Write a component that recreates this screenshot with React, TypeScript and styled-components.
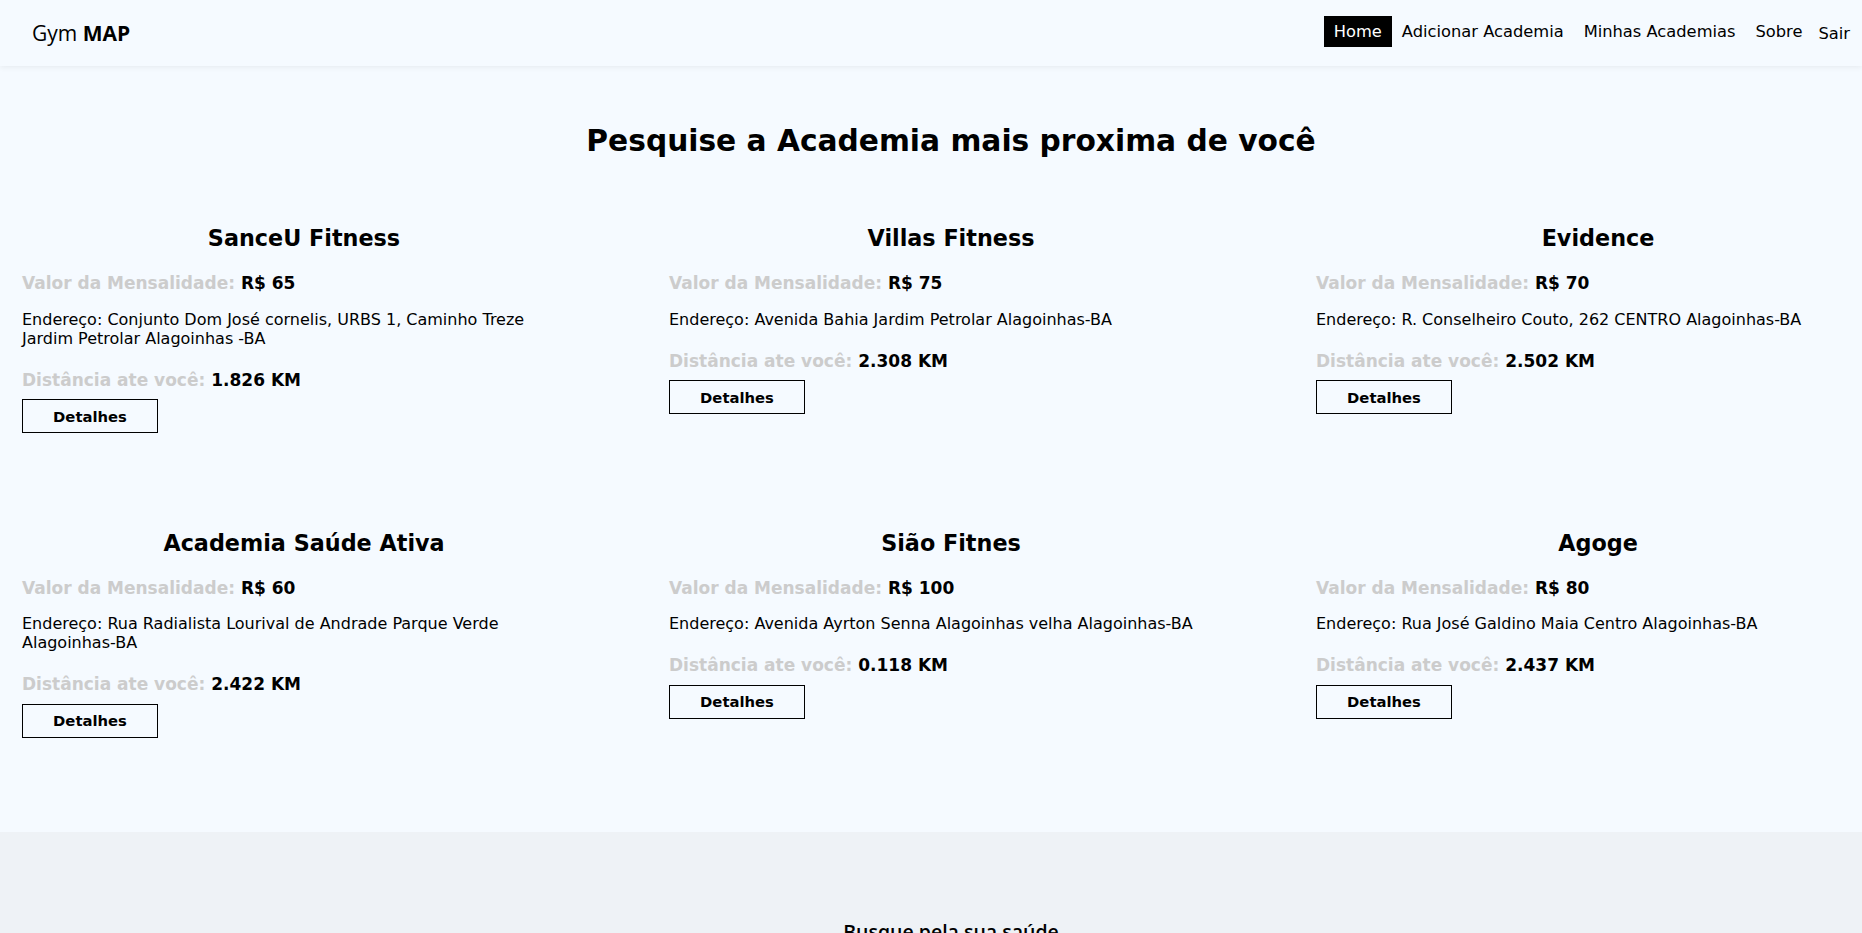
import React from "react";
import styled, { createGlobalStyle } from "styled-components";

const GlobalStyle = createGlobalStyle`
  html { scrollbar-width: none; }
  html::-webkit-scrollbar, body::-webkit-scrollbar { display: none; }
  * { box-sizing: border-box; }
  body {
    margin: 0;
    background: #f5faff;
    font-family: "DejaVu Sans", "Liberation Sans", sans-serif;
    color: #000;
  }
`;

const Page = styled.div`
  width: 100%;
  overflow-x: hidden;
  background: #f5faff;
`;

const NavBar = styled.header`
  position: relative;
  z-index: 2;
  height: 66px;
  padding: 0 6px 3px 32px;
  display: flex;
  align-items: center;
  justify-content: space-between;
  background: #f5faff;
  box-shadow: 0 1px 6px rgba(0, 0, 0, 0.07);
`;

const Logo = styled.div`
  margin-top: 3px;
  font-family: "Open Sans", "Noto Sans", sans-serif;
  font-size: 21px;
  font-weight: 400;
  color: #000;
  b { font-weight: 700; }
`;

const NavList = styled.nav`
  display: flex;
  align-items: center;
`;

const NavLink = styled.a<{ $active?: boolean }>`
  display: block;
  padding: 0 10px;
  line-height: 31px;
  font-size: 16.3px;
  color: ${(p) => (p.$active ? "#fff" : "#000")};
  background: ${(p) => (p.$active ? "#000" : "transparent")};
  text-decoration: none;
  cursor: pointer;
`;

const ExitButton = styled.button`
  margin-top: 3px;
  padding: 0 6px;
  border: none;
  background: transparent;
  font-family: "DejaVu Sans", sans-serif;
  font-size: 16.3px;
  line-height: 31px;
  color: #000;
  cursor: pointer;
`;

const Main = styled.main`
  margin-right: -40px;
  padding: 56px 0 94px;
`;

const Heading = styled.h1`
  margin: 0 0 64px;
  text-align: center;
  font-size: 29.7px;
  line-height: 38px;
  font-weight: 700;
`;

const Grid = styled.section`
  display: grid;
  grid-template-columns: repeat(3, 564px);
  column-gap: 83px;
  row-gap: 95.5px;
  justify-content: center;
  align-items: start;
`;

const Card = styled.article`
  display: flex;
  flex-direction: column;
  align-items: flex-start;
`;

const CardTitle = styled.h2`
  align-self: stretch;
  margin: 0;
  text-align: center;
  font-size: 22.3px;
  line-height: 28px;
  font-weight: 700;
`;

const InfoRow = styled.p<{ $gap: number }>`
  margin: ${(p) => p.$gap}px 0 0;
  font-size: 17px;
  line-height: 22px;
  font-weight: 700;
  color: #000;
  span { color: #cccccc; }
`;

const Address = styled.p`
  margin: 15.7px 0 0;
  max-width: 548px;
  font-size: 16px;
  line-height: 19px;
  font-weight: 400;
`;

const DetailsButton = styled.button`
  margin-top: 8.5px;
  width: 136px;
  height: 34px;
  border: 1px solid #000;
  background: transparent;
  font-family: "DejaVu Sans", sans-serif;
  font-size: 14.8px;
  font-weight: 700;
  color: #000;
  cursor: pointer;
`;

const Footer = styled.footer`
  margin-right: -40px;
  padding: 86px 0 60px;
  background: #eef2f6;
  text-align: center;
`;

const FooterTitle = styled.h3`
  margin: 0;
  font-family: "Open Sans", "Noto Sans", sans-serif;
  font-size: 19.5px;
  font-weight: 600;
`;

type Gym = { name: string; price: string; address: string; distance: string };

const gyms: Gym[] = [
  {
    name: "SanceU Fitness",
    price: "R$ 65",
    address: "Conjunto Dom José cornelis, URBS 1, Caminho Treze Jardim Petrolar Alagoinhas -BA",
    distance: "1.826 KM",
  },
  {
    name: "Villas Fitness",
    price: "R$ 75",
    address: "Avenida Bahia Jardim Petrolar Alagoinhas-BA",
    distance: "2.308 KM",
  },
  {
    name: "Evidence",
    price: "R$ 70",
    address: "R. Conselheiro Couto, 262 CENTRO Alagoinhas-BA",
    distance: "2.502 KM",
  },
  {
    name: "Academia Saúde Ativa",
    price: "R$ 60",
    address: "Rua Radialista Lourival de Andrade Parque Verde Alagoinhas-BA",
    distance: "2.422 KM",
  },
  {
    name: "Sião Fitnes",
    price: "R$ 100",
    address: "Avenida Ayrton Senna Alagoinhas velha Alagoinhas-BA",
    distance: "0.118 KM",
  },
  {
    name: "Agoge",
    price: "R$ 80",
    address: "Rua José Galdino Maia Centro Alagoinhas-BA",
    distance: "2.437 KM",
  },
];

export default function App() {
  return (
    <>
      <GlobalStyle />
      <Page>
        <NavBar>
          <Logo>
            Gym <b>MAP</b>
          </Logo>
          <NavList>
            <NavLink $active>Home</NavLink>
            <NavLink>Adicionar Academia</NavLink>
            <NavLink>Minhas Academias</NavLink>
            <NavLink>Sobre</NavLink>
            <ExitButton>Sair</ExitButton>
          </NavList>
        </NavBar>
        <Main>
          <Heading>Pesquise a Academia mais proxima de você</Heading>
          <Grid>
            {gyms.map((g) => (
              <Card key={g.name}>
                <CardTitle>{g.name}</CardTitle>
                <InfoRow $gap={20}>
                  <span>Valor da Mensalidade:</span> {g.price}
                </InfoRow>
                <Address>Endereço: {g.address}</Address>
                <InfoRow $gap={21}>
                  <span>Distância ate você:</span> {g.distance}
                </InfoRow>
                <DetailsButton>Detalhes</DetailsButton>
              </Card>
            ))}
          </Grid>
        </Main>
        <Footer>
          <FooterTitle>Busque pela sua saúde</FooterTitle>
        </Footer>
      </Page>
    </>
  );
}
